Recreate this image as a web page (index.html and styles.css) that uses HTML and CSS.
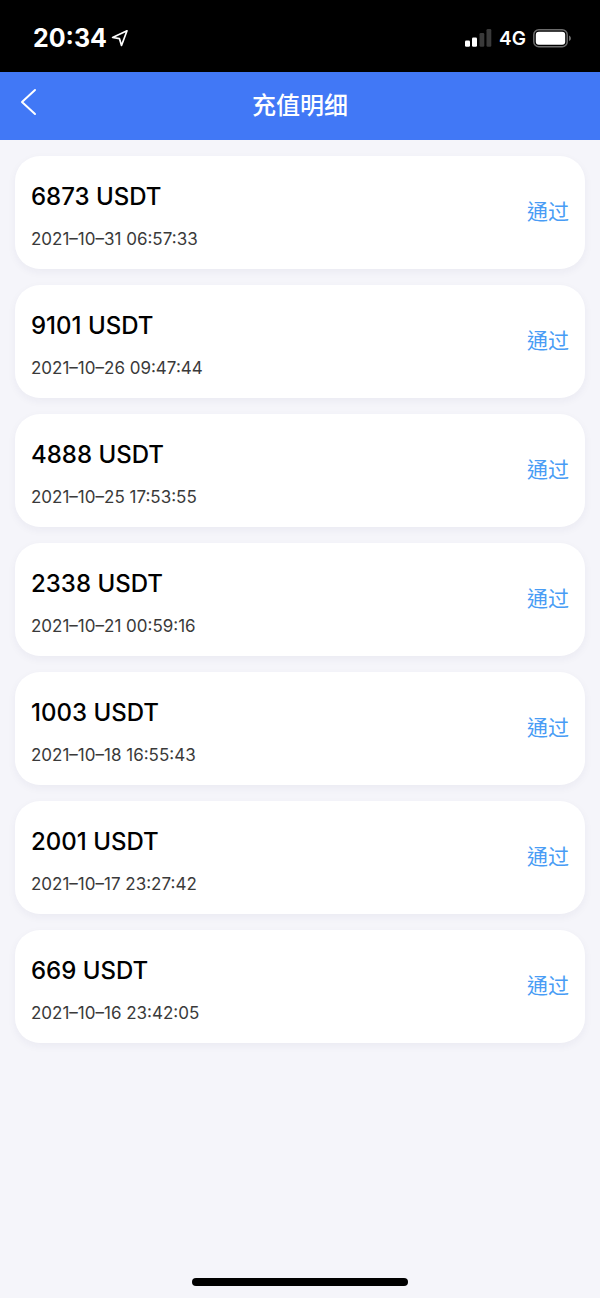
FILE: index.html
```html
<!DOCTYPE html>
<html lang="zh-CN">
<head>
<meta charset="utf-8">
<meta name="viewport" content="width=device-width, initial-scale=1">
<title>充值明细</title>
<link rel="stylesheet" href="styles.css">
</head>
<body>
<div class="status-bar">
  <div class="status-left">
    <span class="clock">20:34</span>
    <svg class="location" viewBox="0 0 18 18" aria-hidden="true"><path d="M16 1.800 1.600 8.500 8.500 9.700 10.500 16.500Z" fill="none" stroke="#fff" stroke-width="1.700" stroke-linejoin="round"/></svg>
  </div>
  <div class="status-right">
    <svg class="signal" viewBox="0 0 27 18" aria-hidden="true">
      <rect x="0" y="11.500" width="5" height="6.300" rx="1.300" fill="#fff"/>
      <rect x="7" y="8.500" width="5" height="9.300" rx="1.300" fill="#fff"/>
      <rect x="14.500" y="4" width="4.800" height="13.800" rx="1.300" fill="#3a3a3a"/>
      <rect x="21.500" y="0" width="4.800" height="17.800" rx="1.300" fill="#3a3a3a"/>
    </svg>
    <span class="network">4G</span>
    <svg class="battery" viewBox="0 0 39 19" aria-hidden="true">
      <rect x=".8" y=".8" width="33.400" height="17" rx="5" fill="none" stroke="#6c6c6c" stroke-width="1.500"/>
      <rect x="2.800" y="2.800" width="29.400" height="13" rx="3" fill="#fff"/>
      <path d="M36 6.500c2.600 1 2.600 4.600 0 5.600Z" fill="#6c6c6c"/>
    </svg>
  </div>
</div>
<header class="nav">
  <button class="back" type="button" aria-label="返回">
    <svg class="back-icon" viewBox="0 0 17 28" aria-hidden="true"><path d="M15 2 2 14 15 26" fill="none" stroke="#fff" stroke-width="2" stroke-linecap="round" stroke-linejoin="round"/></svg>
  </button>
  <h1 class="title">充值明细</h1>
</header>
<main class="content">
  <ul class="records">
    <li class="card"><div><p class="amount">6873 USDT</p><time class="date">2021–10–31 06:57:33</time></div><span class="state" lang="zh-TW">通过</span></li>
    <li class="card"><div><p class="amount">9101 USDT</p><time class="date">2021–10–26 09:47:44</time></div><span class="state" lang="zh-TW">通过</span></li>
    <li class="card"><div><p class="amount">4888 USDT</p><time class="date">2021–10–25 17:53:55</time></div><span class="state" lang="zh-TW">通过</span></li>
    <li class="card"><div><p class="amount">2338 USDT</p><time class="date">2021–10–21 00:59:16</time></div><span class="state" lang="zh-TW">通过</span></li>
    <li class="card"><div><p class="amount">1003 USDT</p><time class="date">2021–10–18 16:55:43</time></div><span class="state" lang="zh-TW">通过</span></li>
    <li class="card"><div><p class="amount">2001 USDT</p><time class="date">2021–10–17 23:27:42</time></div><span class="state" lang="zh-TW">通过</span></li>
    <li class="card"><div><p class="amount">669 USDT</p><time class="date">2021–10–16 23:42:05</time></div><span class="state" lang="zh-TW">通过</span></li>
  </ul>
</main>
<div class="home-indicator"></div>
</body>
</html>
```
FILE: styles.css
```css
* {
  box-sizing: border-box;
}

body {
  margin: 0;
  min-height: 100vh;
  display: flex;
  flex-direction: column;
  background: #f5f5fa;
  color: #000;
  font-family: Inter, "Noto Sans CJK SC", sans-serif;
}

.status-bar {
  display: flex;
  justify-content: space-between;
  align-items: center;
  padding: 20px 28px 16px 33px;
  background: #000;
  color: #fff;
}

.status-left,
.status-right {
  display: flex;
  align-items: center;
  height: 36px;
}

.status-left {
  gap: 4px;
}

.status-right {
  gap: 7px;
}

.clock {
  font-size: 25px;
  font-weight: 700;
}

.location {
  width: 18px;
  height: 18px;
}

.signal {
  width: 27px;
  height: 18px;
}

.network {
  font-size: 19px;
  font-weight: 600;
}

.battery {
  width: 39px;
  height: 19px;
}

.nav {
  display: grid;
  grid-template-columns: 60px 1fr 60px;
  align-items: center;
  height: 68px;
  background: #4178f6;
  color: #fff;
}

.back {
  display: flex;
  padding: 0 0 8px 20px;
  border: 0;
  background: none;
  cursor: pointer;
}

.back-icon {
  width: 17px;
  height: 28px;
}

.title {
  margin: 0;
  text-align: center;
  font-size: 24px;
  font-weight: 500;
  line-height: 36px;
}

.content {
  flex: 1;
  padding: 16px 15px;
}

.records {
  display: flex;
  flex-direction: column;
  gap: 16px;
  margin: 0;
  padding: 0;
  list-style: none;
}

.card {
  display: flex;
  justify-content: space-between;
  align-items: center;
  padding: 24px 16px 17px;
  border-radius: 25px;
  background: #fff;
  box-shadow: 0 3px 8px rgba(40, 40, 90, 0.05);
}

.amount {
  margin: 0 0 12px;
  font-size: 24px;
  font-weight: 500;
  line-height: 34px;
}

.date {
  display: block;
  color: #3a3a3a;
  font-size: 17px;
  font-weight: 400;
  line-height: 26px;
}

.state {
  padding-bottom: 12px;
  color: #489cf5;
  font-family: "Noto Sans CJK TC", sans-serif;
  font-size: 21px;
  line-height: 30px;
}

.home-indicator {
  align-self: center;
  width: 36%;
  height: 8px;
  margin-bottom: 12px;
  border-radius: 4px;
  background: #000;
}
```
